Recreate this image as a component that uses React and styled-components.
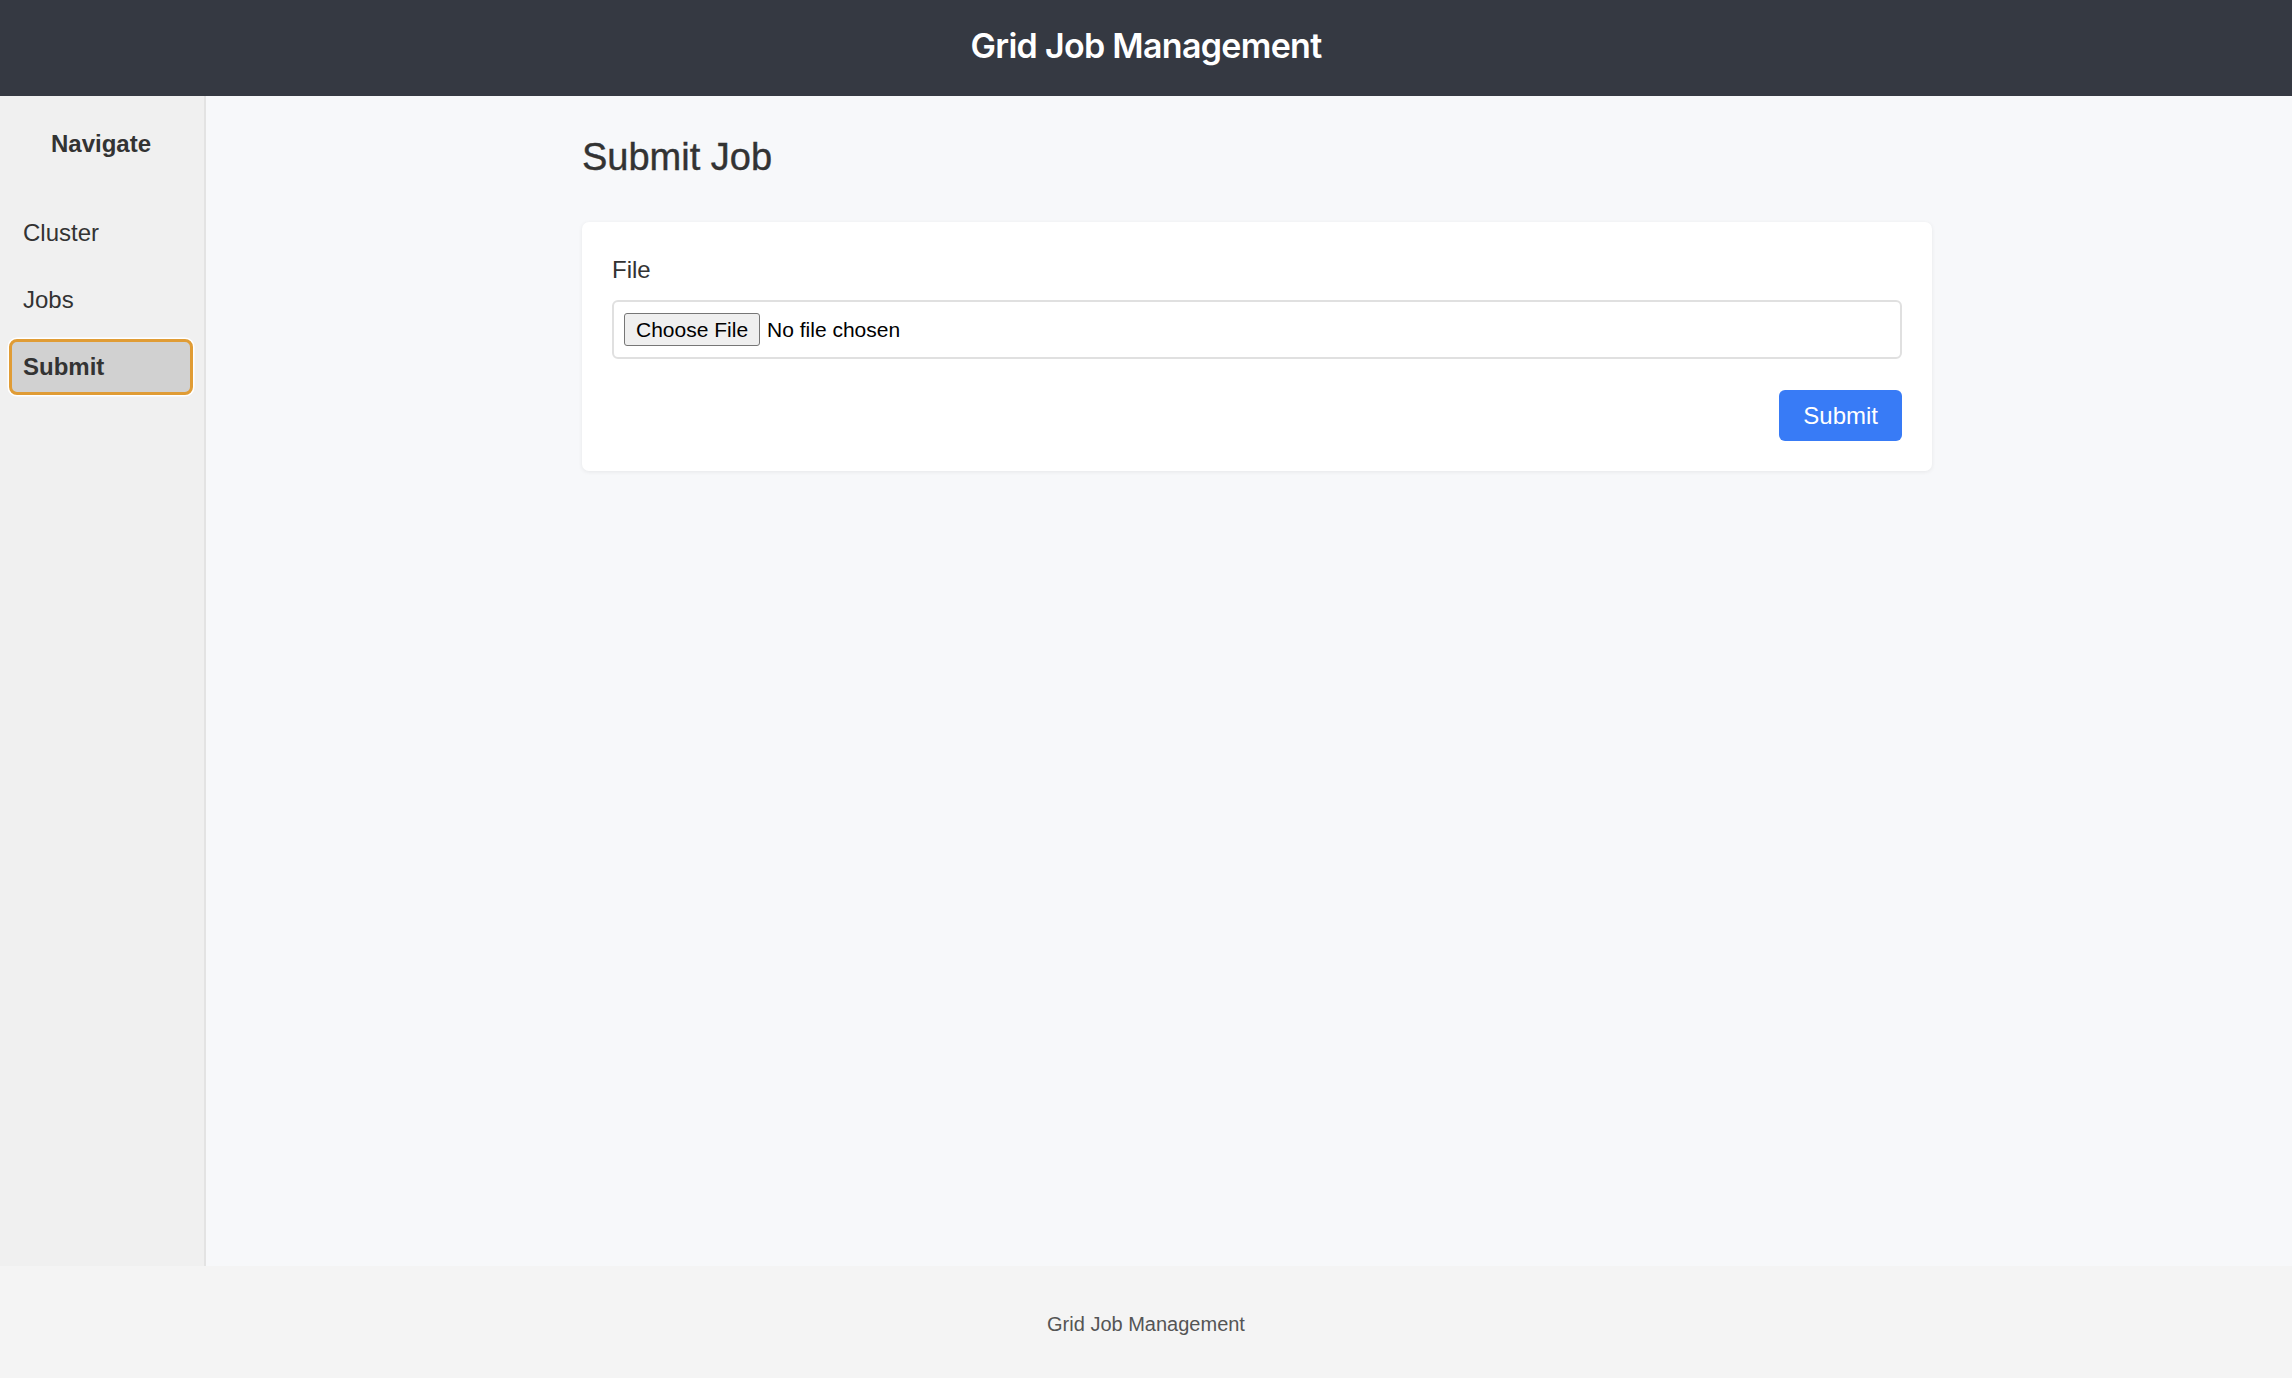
import React from "react";
import styled, { createGlobalStyle } from "styled-components";

const Global = createGlobalStyle`
  html, body { margin: 0; padding: 0; }
  body {
    font-family: "Liberation Sans", Arial, Helvetica, sans-serif;
    color: #333;
    background: #f7f8fa;
  }
  * { box-sizing: border-box; }
`;

const Page = styled.div`
  display: flex;
  flex-direction: column;
  min-height: 100vh;
`;

const Header = styled.header`
  height: 96px;
  flex: 0 0 96px;
  background: #353942;
  display: flex;
  align-items: center;
  justify-content: center;
`;

const Title = styled.h1`
  margin: 0;
  font-family: Inter, "Liberation Sans", sans-serif;
  font-weight: 600;
  font-size: 34px;
  letter-spacing: -0.7px;
  color: #ffffff;
  line-height: 1;
  padding-bottom: 4px;
`;

const Body = styled.div`
  flex: 1;
  display: flex;
`;

const Sidebar = styled.nav`
  width: 206px;
  flex: 0 0 206px;
  background: #f0f0f0;
  border-right: 2px solid #e3e3e3;
  padding: 34px 11px 0 9px;
  display: flex;
  flex-direction: column;
`;

const NavTitle = styled.div`
  font-size: 24px;
  font-weight: 700;
  line-height: 28px;
  text-align: center;
  color: #333;
  margin-bottom: 47px;
`;

const NavList = styled.div`
  display: flex;
  flex-direction: column;
  gap: 11px;
`;

const NavItem = styled.a`
  display: flex;
  align-items: center;
  height: 56px;
  padding-left: 11px;
  border: 3px solid ${(p) => (p.$active ? "#e09c35" : "transparent")};
  border-radius: 8px;
  background: ${(p) => (p.$active ? "#d1d1d1" : "transparent")};
  box-shadow: ${(p) => (p.$active ? "0 0 0 1.5px #ffffff" : "none")};
  font-size: 24px;
  font-weight: ${(p) => (p.$active ? 700 : 400)};
  color: #333;
  text-decoration: none;
  cursor: pointer;
`;

const Main = styled.main`
  flex: 1;
  background: #f7f8fa;
  padding: 39px 0 40px 16px;
`;

const Container = styled.div`
  width: 1350px;
  margin: 0 auto;
`;

const Heading = styled.h2`
  margin: 0 0 43px;
  font-size: 38px;
  line-height: 44px;
  font-weight: 400;
  -webkit-text-stroke: 0.4px #333;
  color: #333;
`;

const Card = styled.form`
  background: #ffffff;
  border-radius: 7px;
  box-shadow: 0 1px 4px rgba(0, 0, 0, 0.07);
  padding: 30px;
  display: flex;
  flex-direction: column;
`;

const Label = styled.label`
  display: block;
  font-size: 24px;
  line-height: 36px;
  color: #333;
  margin-bottom: 12px;
`;

const FileBox = styled.label`
  display: flex;
  align-items: center;
  gap: 7px;
  height: 59px;
  padding: 0 10px;
  border: 2px solid #e0e0e0;
  border-radius: 6px;
  background: #fff;
  cursor: pointer;
`;

const HiddenInput = styled.input`
  display: none;
`;

const FileButton = styled.span`
  display: inline-flex;
  align-items: center;
  height: 33px;
  padding: 0 11px;
  background: #efefef;
  border: 1px solid #767676;
  border-radius: 3px;
  font-size: 21px;
  color: #000;
`;

const FileName = styled.span`
  font-size: 21px;
  color: #000;
`;

const Actions = styled.div`
  display: flex;
  justify-content: flex-end;
  margin-top: 31px;
`;

const SubmitButton = styled.button`
  height: 51px;
  padding: 0 24px;
  border: none;
  border-radius: 6px;
  background: #387bf6;
  color: #fff;
  font-family: "Liberation Sans", Arial, sans-serif;
  font-size: 24px;
  cursor: pointer;
`;

const Footer = styled.footer`
  height: 112px;
  flex: 0 0 112px;
  background: #f4f4f4;
  display: flex;
  align-items: center;
  justify-content: center;
  padding-top: 5px;
  font-size: 20px;
  color: #555;
`;

export default function App() {
  return (
    <Page>
      <Global />
      <Header>
        <Title>Grid Job Management</Title>
      </Header>
      <Body>
        <Sidebar>
          <NavTitle>Navigate</NavTitle>
          <NavList>
            <NavItem>Cluster</NavItem>
            <NavItem>Jobs</NavItem>
            <NavItem $active>Submit</NavItem>
          </NavList>
        </Sidebar>
        <Main>
          <Container>
            <Heading>Submit Job</Heading>
            <Card onSubmit={(e) => e.preventDefault()}>
              <Label htmlFor="file-input">File</Label>
              <FileBox>
                <HiddenInput id="file-input" type="file" />
                <FileButton>Choose File</FileButton>
                <FileName>No file chosen</FileName>
              </FileBox>
              <Actions>
                <SubmitButton type="submit">Submit</SubmitButton>
              </Actions>
            </Card>
          </Container>
        </Main>
      </Body>
      <Footer>Grid Job Management</Footer>
    </Page>
  );
}
